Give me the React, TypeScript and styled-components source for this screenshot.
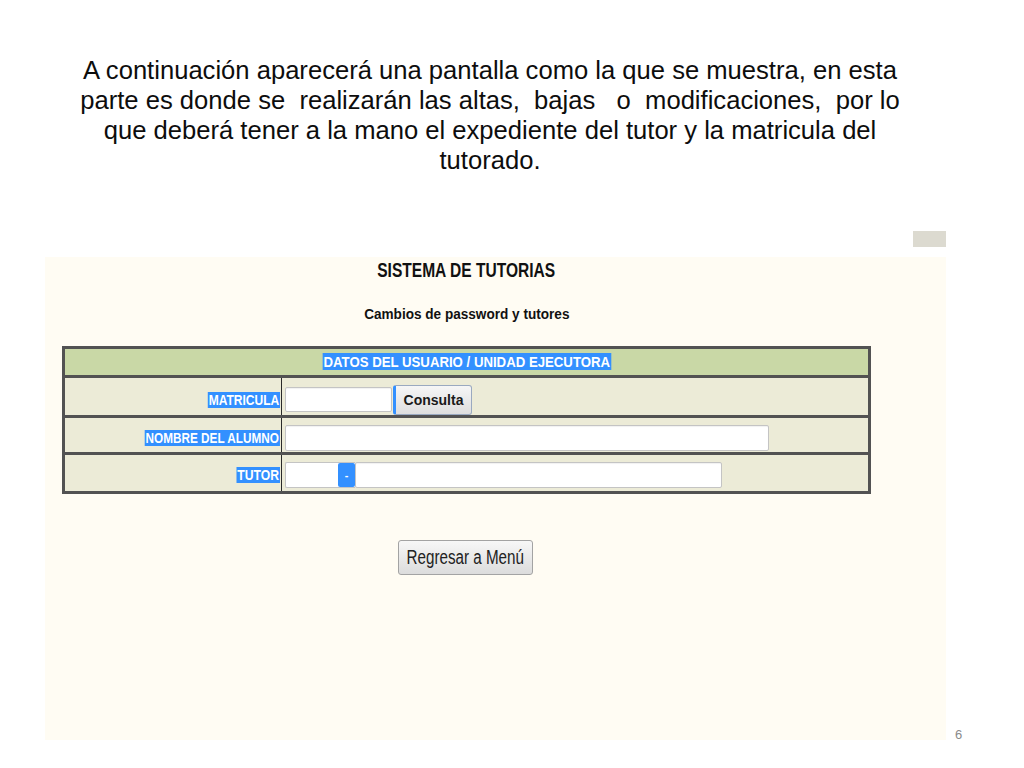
import React from "react";
import styled, { createGlobalStyle } from "styled-components";

const Global = createGlobalStyle`
  html, body { margin: 0; padding: 0; background: #ffffff; }
  body { font-family: "Liberation Sans", Arial, sans-serif; }
`;

const Slide = styled.div`
  width: 1024px;
  height: 768px;
  background: #ffffff;
  display: flex;
  flex-direction: column;
  overflow: hidden;
`;

const Intro = styled.p`
  margin: 0;
  padding: 55px 0 0 0;
  width: 980px;
  text-align: center;
  font-family: "Liberation Sans", Arial, sans-serif;
  font-size: 25.6px;
  line-height: 30px;
  color: #0d0d0d;
  white-space: pre-wrap;
`;

const TopStrip = styled.div`
  display: flex;
  justify-content: flex-end;
  width: 946px;
  margin-top: 56px;
`;

const GreyTab = styled.div`
  width: 33px;
  height: 16px;
  background: #dcdad0;
`;

const PanelRow = styled.div`
  display: flex;
  align-items: flex-end;
  margin-top: 10px;
  padding-left: 45px;
`;

const Panel = styled.div`
  width: 884px;
  height: 483px;
  background: #fffcf3;
  padding-left: 17px;
  display: flex;
  flex-direction: column;
`;

const Content = styled.div`
  width: 809px;
  display: flex;
  flex-direction: column;
  align-items: center;
`;

const Scaled = styled.span<{ $sx: number; $origin?: string }>`
  display: inline-block;
  transform: scaleX(${(p) => p.$sx});
  transform-origin: ${(p) => p.$origin || "center"};
  white-space: nowrap;
`;

const SystemTitle = styled.div`
  margin-top: 1px;
  font-family: "Liberation Sans", Arial, sans-serif;
  font-weight: bold;
  font-size: 21px;
  line-height: 24px;
  color: #111;
`;

const SubTitle = styled.div`
  margin-top: 23px;
  font-family: "Liberation Sans", Arial, sans-serif;
  font-weight: bold;
  font-size: 14px;
  line-height: 18px;
  color: #111;
`;

const Table = styled.div`
  margin-top: 23px;
  width: 803px;
  border: 3px solid #525252;
  display: flex;
  flex-direction: column;
`;

const HeaderRow = styled.div`
  height: 26px;
  background: #c9d8a6;
  border-bottom: 3px solid #525252;
  display: flex;
  align-items: center;
  justify-content: center;
`;

const Highlight = styled.span`
  background: #3390ff;
  color: #ffffff;
  font-family: "Liberation Sans", Arial, sans-serif;
  font-weight: bold;
`;

const HeaderText = styled(Highlight)`
  font-size: 15px;
  line-height: 22px;
  padding: 0 1px;
`;

const Row = styled.div<{ $h: number; $pt: number; $last?: boolean }>`
  height: ${(p) => p.$h}px;
  display: grid;
  grid-template-columns: 216px 1px 1fr;
  background: #ecebd7;
  border-bottom: ${(p) => (p.$last ? "none" : "3px solid #525252")};
  box-sizing: content-box;
  & > * {
    padding-top: ${(p) => p.$pt}px;
  }
`;

const LabelCell = styled.div`
  display: flex;
  align-items: center;
  justify-content: flex-end;
  padding-right: 1px;
`;

const LabelText = styled(Highlight)`
  font-size: 14px;
  line-height: 18px;
  padding: 0 1px;
`;

const Divider = styled.div`
  background: #2a2a2a;
  padding-top: 0 !important;
`;

const FieldCell = styled.div`
  display: flex;
  align-items: center;
  padding-left: 3px;
`;

const TextInput = styled.div<{ $w: number; $h: number }>`
  width: ${(p) => p.$w}px;
  height: ${(p) => p.$h}px;
  box-sizing: border-box;
  background: #ffffff;
  border: 1px solid #c4c4c4;
  border-radius: 2px;
  box-shadow: inset 0 1px 1px rgba(0, 0, 0, 0.06);
`;

const ConsultaButton = styled.div`
  width: 79px;
  height: 30px;
  box-sizing: border-box;
  margin-left: 1px;
  border: 1px solid #9aa9c0;
  border-left: 3px solid #3390ff;
  border-radius: 3px;
  background: linear-gradient(#f6f6f6, #dedede);
  display: flex;
  align-items: center;
  justify-content: center;
  font-family: "Liberation Sans", Arial, sans-serif;
  font-weight: bold;
  font-size: 14px;
  color: #1a1a1a;
`;

const SelectBox = styled.div`
  width: 70px;
  height: 26px;
  box-sizing: border-box;
  background: #ffffff;
  border: 1px solid #c4c4c4;
  border-right: none;
  border-radius: 2px 0 0 2px;
  display: flex;
  justify-content: flex-end;
`;

const SelectArrow = styled.div`
  width: 17px;
  height: 100%;
  background: #3390ff;
  border-radius: 2px;
  color: #ffffff;
  font-size: 11px;
  font-weight: bold;
  display: flex;
  align-items: center;
  justify-content: center;
  font-family: "Liberation Sans", Arial, sans-serif;
`;

const BackButton = styled.div`
  margin-top: 46px;
  margin-right: 3px;
  width: 135px;
  height: 35px;
  box-sizing: border-box;
  border: 1px solid #a3a3a3;
  border-radius: 3px;
  background: linear-gradient(#f7f7f7, #dcdcdc);
  display: flex;
  align-items: center;
  justify-content: center;
  font-family: "Liberation Sans", Arial, sans-serif;
  font-size: 20px;
  color: #222;
  overflow: hidden;
`;

const PageNumber = styled.div`
  margin-left: 9px;
  margin-bottom: -3px;
  font-family: "Liberation Sans", Arial, sans-serif;
  font-size: 13px;
  line-height: 16px;
  color: #8a8a8a;
`;

export default function App() {
  return (
    <>
      <Global />
      <Slide>
        <Intro>
          {"A continuación aparecerá una pantalla como la que se muestra, en esta\nparte es donde se  realizarán las altas,  bajas   o  modificaciones,  por lo\nque deberá tener a la mano el expediente del tutor y la matricula del\ntutorado."}
        </Intro>
        <TopStrip>
          <GreyTab />
        </TopStrip>
        <PanelRow>
          <Panel>
            <Content>
              <SystemTitle>
                <Scaled $sx={0.74}>SISTEMA DE TUTORIAS</Scaled>
              </SystemTitle>
              <SubTitle>
                <Scaled $sx={0.97}>Cambios de password y tutores</Scaled>
              </SubTitle>
              <Table>
                <HeaderRow>
                  <Scaled $sx={0.88}>
                    <HeaderText>DATOS DEL USUARIO / UNIDAD EJECUTORA</HeaderText>
                  </Scaled>
                </HeaderRow>
                <Row $h={37} $pt={6}>
                  <LabelCell>
                    <Scaled $sx={0.86} $origin="right">
                      <LabelText>MATRICULA</LabelText>
                    </Scaled>
                  </LabelCell>
                  <Divider />
                  <FieldCell>
                    <TextInput $w={107} $h={25} />
                    <ConsultaButton>Consulta</ConsultaButton>
                  </FieldCell>
                </Row>
                <Row $h={34} $pt={6}>
                  <LabelCell>
                    <Scaled $sx={0.84} $origin="right">
                      <LabelText>NOMBRE DEL ALUMNO</LabelText>
                    </Scaled>
                  </LabelCell>
                  <Divider />
                  <FieldCell>
                    <TextInput $w={484} $h={26} />
                  </FieldCell>
                </Row>
                <Row $h={36} $pt={4} $last>
                  <LabelCell>
                    <Scaled $sx={0.87} $origin="right">
                      <LabelText>TUTOR</LabelText>
                    </Scaled>
                  </LabelCell>
                  <Divider />
                  <FieldCell>
                    <SelectBox>
                      <SelectArrow>-</SelectArrow>
                    </SelectBox>
                    <TextInput $w={367} $h={26} />
                  </FieldCell>
                </Row>
              </Table>
              <BackButton>
                <Scaled $sx={0.76}>Regresar a Menú</Scaled>
              </BackButton>
            </Content>
          </Panel>
          <PageNumber>6</PageNumber>
        </PanelRow>
      </Slide>
    </>
  );
}
